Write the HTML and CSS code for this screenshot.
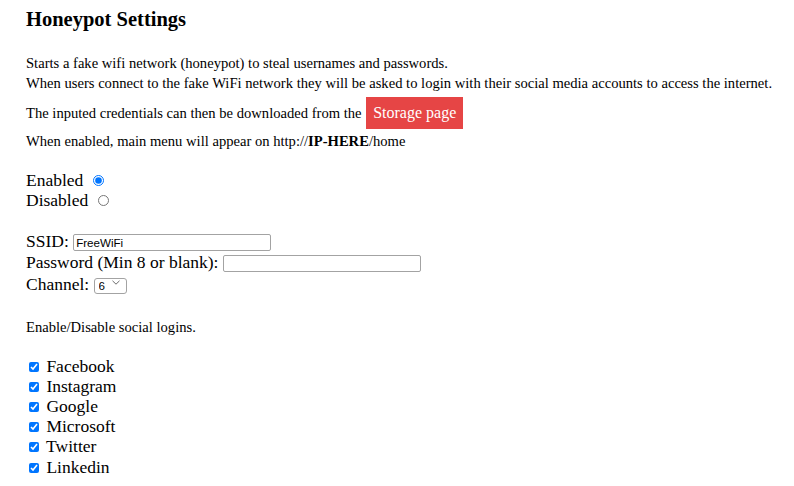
FILE: index.html
```html
<!DOCTYPE html>
<html>
<head>
<meta charset="utf-8">
<title>Honeypot Settings</title>
<link rel="stylesheet" href="styles.css">
</head>
<body>
<div class="page">
  <h2 class="title">Honeypot Settings</h2>
  <p class="intro">Starts a fake wifi network (honeypot) to steal usernames and passwords.<br>When users connect to the fake WiFi network they will be asked to login with their social media accounts to access the internet.</p>
  <p class="storage">The inputed credentials can then be downloaded from the <a class="btn" href="#">Storage page</a></p>
  <p class="note">When enabled, main menu will appear on http://<b>IP-HERE</b>/home</p>

  <form class="form">
    <div class="group">
      <div class="row">Enabled <input class="radio" type="radio" name="hp" checked></div>
      <div class="row">Disabled <input class="radio" type="radio" name="hp"></div>
    </div>

    <div class="group fields">
      <div class="frow">SSID: <input class="text" type="text" value="FreeWiFi"></div>
      <div class="frow">Password (Min 8 or blank): <input class="text" type="text" value=""></div>
      <div class="frow">Channel: <span class="selwrap"><select class="sel"><option>6</option></select><svg class="chev" width="8" height="5" viewBox="0 0 8 5"><path d="M0.5 0.8 L4 4.2 L7.5 0.8" fill="none" stroke="#6b6b6b" stroke-width="1"/></svg></span></div>
    </div>

    <p class="sub">Enable/Disable social logins.</p>

    <div class="group socials">
      <div class="crow"><input class="check" type="checkbox" checked> Facebook</div>
      <div class="crow"><input class="check" type="checkbox" checked> Instagram</div>
      <div class="crow"><input class="check" type="checkbox" checked> Google</div>
      <div class="crow"><input class="check" type="checkbox" checked> Microsoft</div>
      <div class="crow"><input class="check" type="checkbox" checked> Twitter</div>
      <div class="crow"><input class="check" type="checkbox" checked> Linkedin</div>
    </div>
  </form>
</div>
</body>
</html>
```

FILE: styles.css
```css
html, body {
  margin: 0;
  padding: 0;
  background: #ffffff;
}

body {
  font-family: "Liberation Serif", "Times New Roman", serif;
  color: #000;
}

.page {
  padding: 7px 8px 0 26px;
}

.title {
  margin: 0;
  font-size: 20.5px;
  line-height: 24px;
  font-weight: bold;
}

.intro {
  margin: 21.6px 0 0 0;
  font-size: 14.6px;
  line-height: 20px;
  white-space: nowrap;
}

.storage {
  margin: 4.5px 0 0 0;
  font-size: 14.6px;
  line-height: 20px;
}

.btn {
  display: inline-block;
  background: #e64545;
  color: #fff;
  text-decoration: none;
  font-size: 16px;
  line-height: 18px;
  padding: 7px 7px 7px 7px;
  margin-left: 1px;
}

.note {
  margin: 2px 0 0 0;
  font-size: 14.6px;
  line-height: 20px;
}

.form {
  margin: 19px 0 0 0;
  font-size: 17.5px;
}

.row {
  line-height: 20px;
}

.radio {
  width: 11px;
  height: 11px;
  margin: 0 0 0 5px;
  vertical-align: baseline;
}

.fields {
  margin-top: 20.5px;
}

.frow {
  line-height: 21.5px;
}

.text {
  box-sizing: border-box;
  width: 198px;
  height: 17px;
  margin: 0;
  padding: 0 2px;
  border: 1px solid #a3a3a3;
  border-radius: 2px;
  font-family: "Liberation Sans", Arial, sans-serif;
  font-size: 11.6px;
  color: #000;
  background: #fff;
  vertical-align: baseline;
}

.selwrap {
  position: relative;
  display: inline-block;
}

.sel {
  -webkit-appearance: none;
  appearance: none;
  box-sizing: border-box;
  width: 33px;
  height: 16px;
  margin: 0;
  padding: 0 0 0 4px;
  border: 1px solid #a3a3a3;
  border-radius: 3px;
  background: #fff;
  font-family: "Liberation Sans", Arial, sans-serif;
  font-size: 11.6px;
  line-height: 14px;
  color: #000;
}

.chev {
  position: absolute;
  right: 7px;
  top: 6px;
  pointer-events: none;
}

.sub {
  margin: 21.5px 0 0 0;
  font-size: 14.6px;
  line-height: 20px;
}

.socials {
  margin-top: 19px;
}

.crow {
  line-height: 20.2px;
}

.check {
  width: 10px;
  height: 10px;
  margin: 0 3px 0 3px;
  vertical-align: baseline;
}
```
